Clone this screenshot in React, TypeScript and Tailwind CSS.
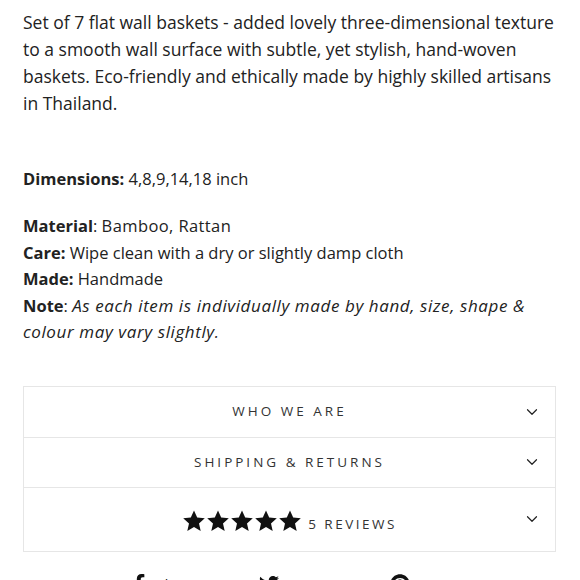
import { ChevronDown } from 'lucide-react';
import { FaFacebookF, FaTwitter, FaPinterest } from 'react-icons/fa';

const font = { fontFamily: '"Open Sans", "Liberation Sans", sans-serif' };

function Star() {
  return (
    <svg viewBox="0 0 24 24" className="w-[24px] h-[24px]" fill="#111">
      <path d="M12 1.5l3.2 7.1 7.6.7-5.8 5.1 1.7 7.6L12 18l-6.7 4 1.7-7.6-5.8-5.1 7.6-.7z" />
    </svg>
  );
}

function Row({ children, tall }: { children: React.ReactNode; tall?: boolean }) {
  return (
    <div className={`relative flex items-center justify-center border-t border-[#e6e6e6] first:border-t-0 ${tall ? 'h-[64px]' : 'h-[50px]'}`}>
      {children}
      <ChevronDown className="absolute right-[14px] text-[#222]" size={18} strokeWidth={1.6} />
    </div>
  );
}

export default function App() {
  return (
    <div className="w-[580px] h-[580px] overflow-hidden bg-white text-[#222]" style={font}>
      <div className="px-[23px] pt-[9px]">
        {/* Description */}
        <p className="text-[17.5px] leading-[27px] whitespace-nowrap">
          Set of 7 flat wall baskets - added lovely three-dimensional texture<br />
          to a smooth wall surface with subtle, yet stylish, hand-woven<br />
          baskets. Eco-friendly and ethically made by highly skilled artisans<br />
          in Thailand.
        </p>

        <p className="mt-[48px] text-[16.5px] leading-[27px]">
          <b className="font-bold">Dimensions:</b> 4,8,9,14,18 inch
        </p>

        <div className="mt-[21px] text-[16.5px] leading-[26.5px] whitespace-nowrap">
          <p><b className="font-bold">Material</b>: <span className="tracking-[0.4px]">Bamboo, Rattan</span></p>
          <p><b className="font-bold">Care:</b> Wipe clean with a dry or slightly damp cloth</p>
          <p><b className="font-bold">Made:</b> Handmade</p>
          <p>
            <b className="font-bold">Note</b>:{' '}
            <i className="text-[17px] tracking-[0.6px]">As each item is individually made by hand, size, shape &amp;<br />colour may vary slightly.</i>
          </p>
        </div>

        {/* Accordion */}
        <div className="mt-[40px] w-[533px] border border-[#e6e6e6]">
          <Row>
            <span className="text-[13.5px] tracking-[3px] text-[#333]">WHO WE ARE</span>
          </Row>
          <Row>
            <span className="text-[13.5px] tracking-[3px] text-[#333]">SHIPPING &amp; RETURNS</span>
          </Row>
          <Row tall>
            <div className="flex items-end gap-[6px] mt-[4px]">
              <div className="flex">
                <Star />
                <Star />
                <Star />
                <Star />
                <Star />
              </div>
              <span className="text-[13.5px] tracking-[2.5px] text-[#333] leading-[18px]">5 REVIEWS</span>
            </div>
          </Row>
        </div>

        {/* Share */}
        <div className="mt-[22px] flex justify-center gap-[64px] text-[#111] text-[14px]">
          <span className="flex items-center gap-2"><FaFacebookF size={20} /> Share</span>
          <span className="flex items-center gap-2"><FaTwitter size={20} /> Tweet</span>
          <span className="flex items-center gap-2"><FaPinterest size={20} /> Pin it</span>
        </div>
      </div>
    </div>
  );
}
